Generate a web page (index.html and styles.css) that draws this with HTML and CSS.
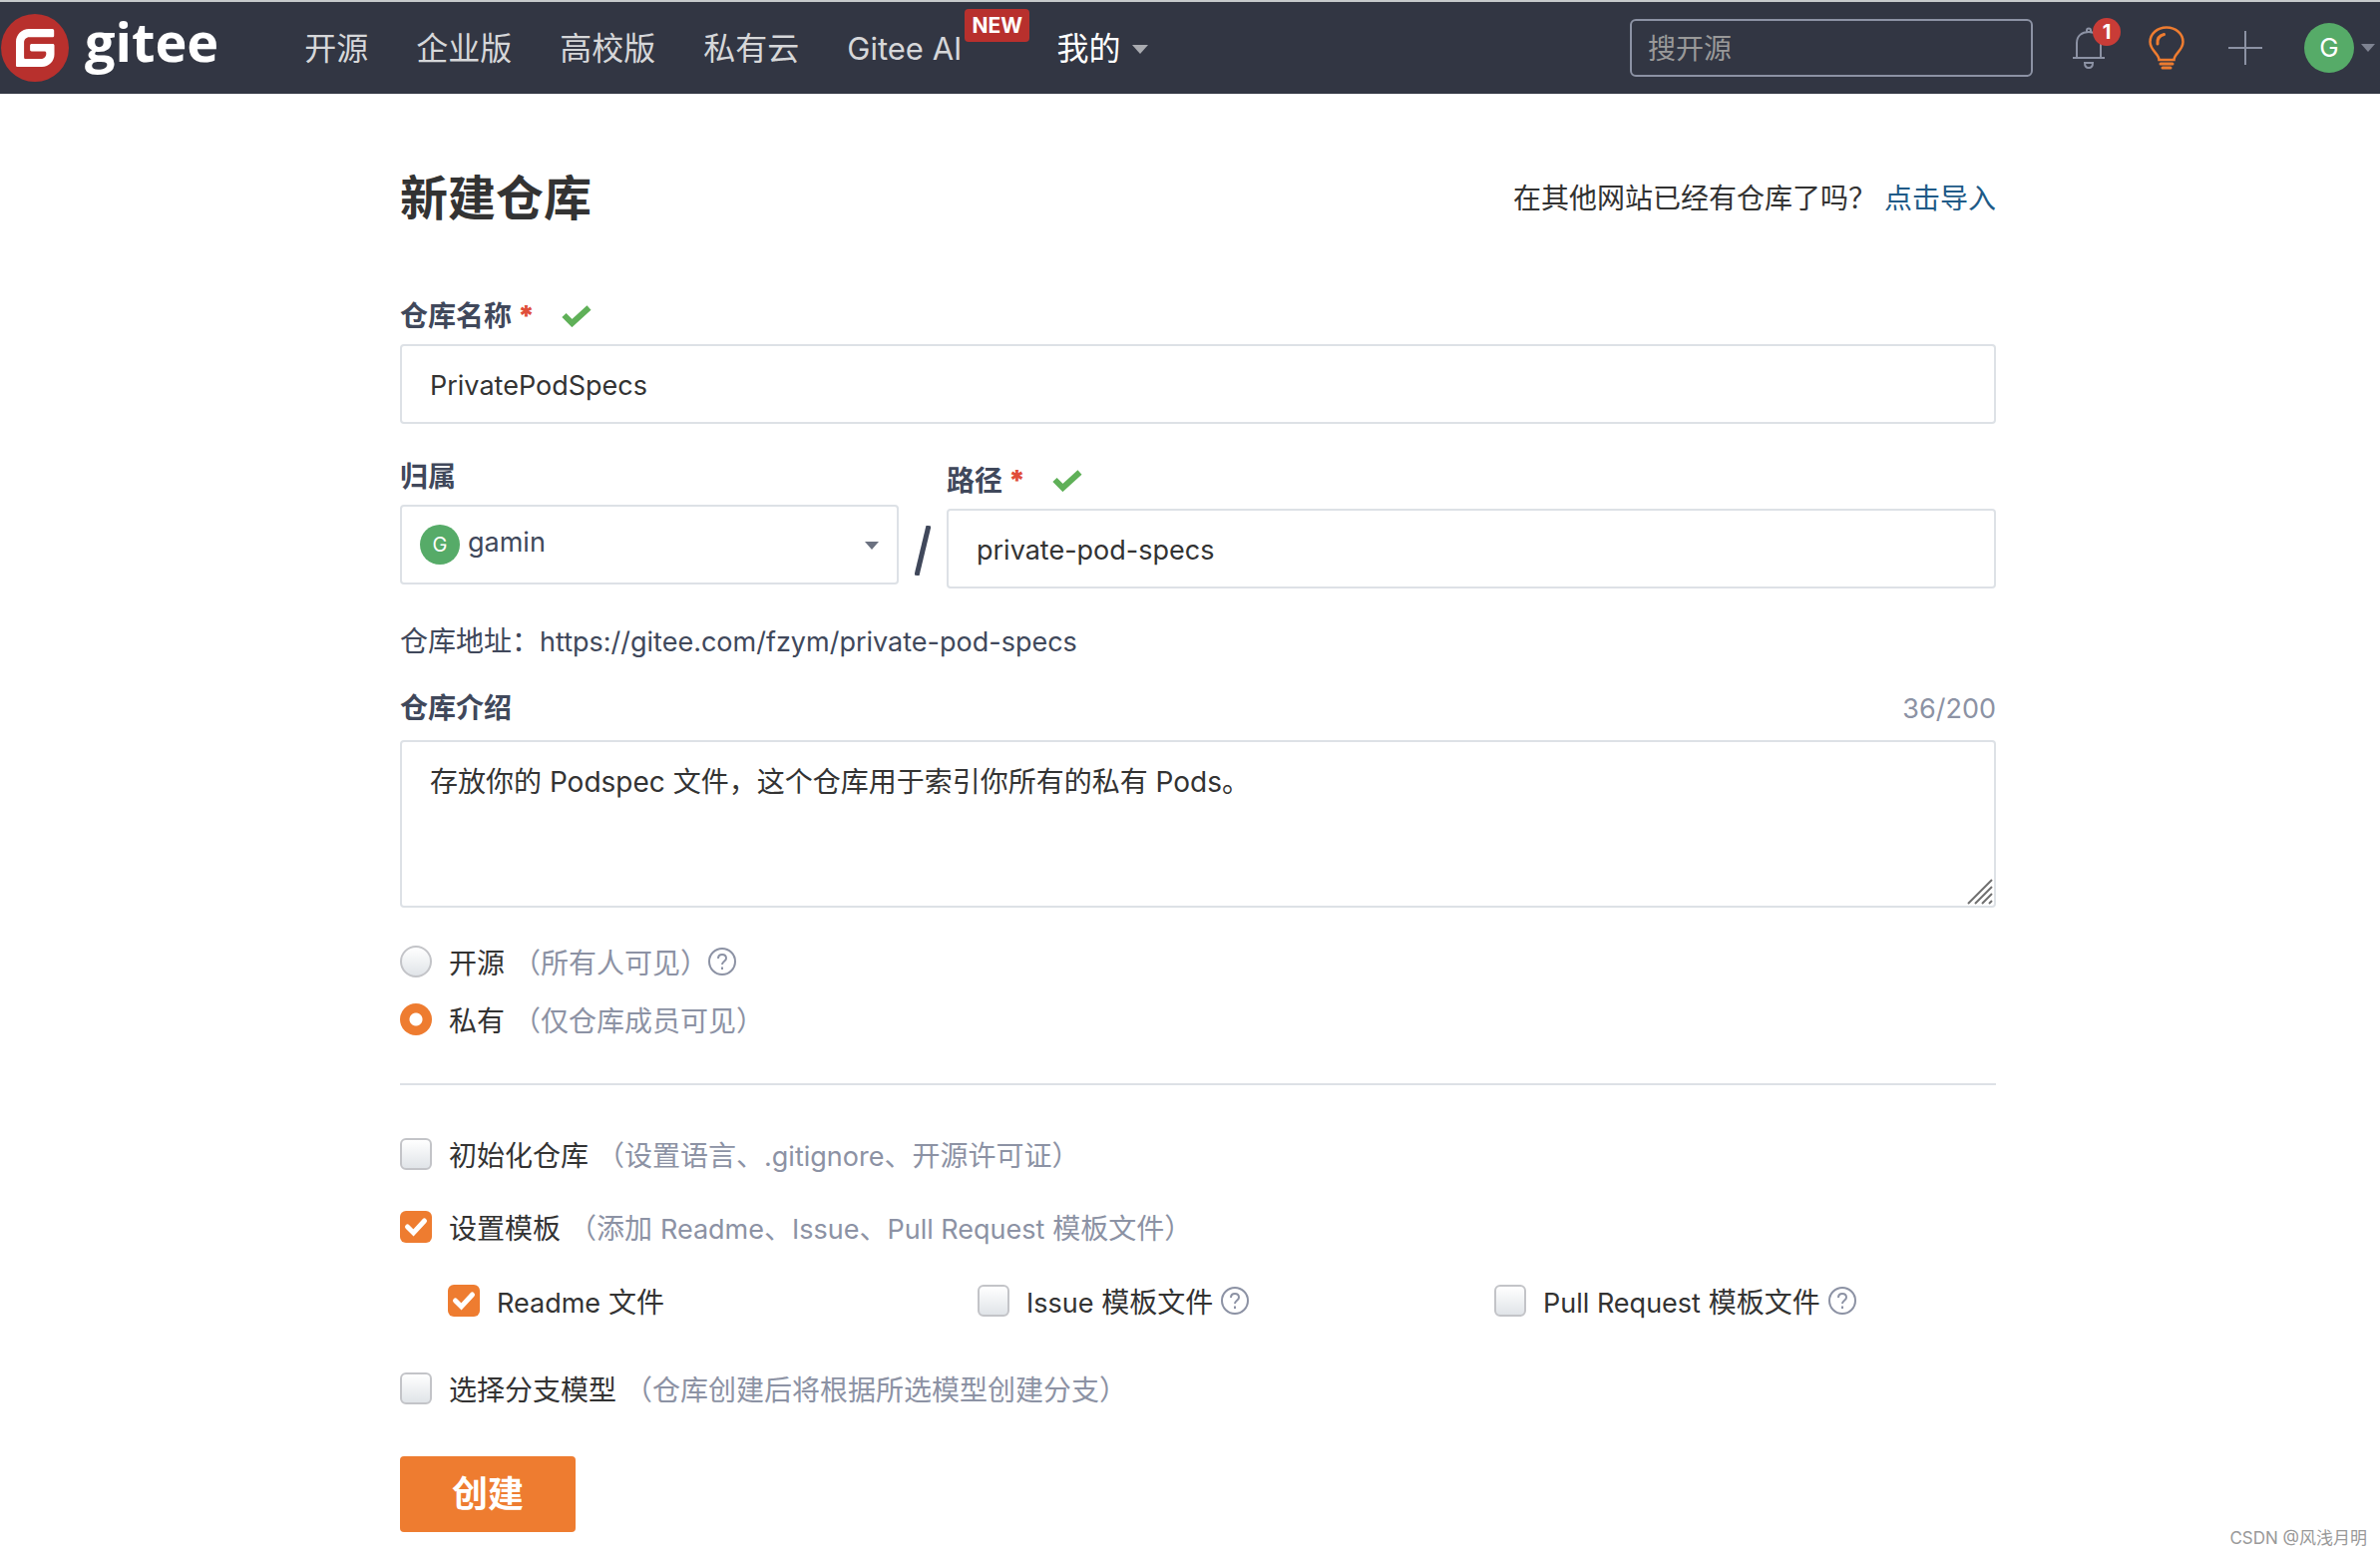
FILE: index.html
```html
<!DOCTYPE html>
<html lang="zh-CN">
<head>
<meta charset="utf-8">
<meta name="viewport" content="width=device-width, initial-scale=1">
<title>新建仓库 - Gitee</title>
<link rel="stylesheet" href="styles.css">
</head>
<body>
<header class="topbar">
  <a class="brand" href="#">
    <svg class="brand-mark" viewBox="0 0 68 68" aria-hidden="true">
      <circle cx="34" cy="34" r="34" fill="#b8302d"/>
      <path fill="#fff" d="M51.500 15H28C20.800 15 15 20.800 15 28v23.500c0 .9.700 1.600 1.600 1.600H41c7 0 12.500-5.600 12.500-12.500V31.600c0-.9-.7-1.600-1.600-1.600H30.700c-.9 0-1.600.7-1.600 1.600v4.200c0 .9.700 1.600 1.600 1.600h13c.9 0 1.600.7 1.600 1.600v1c0 2.700-2.200 5-5 5H24.700c-.9 0-1.600-.7-1.600-1.600V28.500c0-2.900 2.300-5.200 5.100-5.200h23.300c1 0 1.700-.7 1.700-1.600v-5c0-.9-.7-1.700-1.700-1.700z"/>
    </svg>
    <span class="brand-name">gitee</span>
  </a>
  <nav class="nav">
    <a href="#">开源</a>
    <a href="#">企业版</a>
    <a href="#">高校版</a>
    <a href="#">私有云</a>
    <a class="nav-ai" href="#">Gitee AI<span class="badge-new">NEW</span></a>
    <a class="nav-mine" href="#">我的<i class="caret"></i></a>
  </nav>
  <div class="tools">
    <input class="search" type="search" placeholder="搜开源" aria-label="搜开源">
    <button class="tool tool-bell" type="button" aria-label="通知">
      <svg width="34" height="42" viewBox="0 0 34 42" fill="none" stroke="#8c92a4" stroke-width="2">
        <path d="M1 31h32M5 31V16C5 9 10 5 17 5s12 4 12 11v15M15 5V3.500a2 2 0 0 1 4 0V5M13 36h8c0 3-1.500 5-4 5s-4-2-4-5z"/>
      </svg>
      <span class="count">1</span>
    </button>
    <button class="tool tool-bulb" type="button" aria-label="建议">
      <svg width="36" height="44" viewBox="0 0 36 44" fill="none" stroke="#ee7c30" stroke-width="2.500" stroke-linecap="round">
        <path d="M10.500 34c0-6-9-9.500-9-18C1.500 8 8.500 1.500 18 1.500S34.500 8 34.500 16c0 8.500-9 12-9 18z"/>
        <path d="M9 18c-.5-5 2-8.500 6.500-9.500" stroke-width="3"/>
        <path d="M12 38h12M14 42h8" stroke-width="3"/>
      </svg>
    </button>
    <button class="tool tool-plus" type="button" aria-label="新建">
      <svg width="34" height="34" viewBox="0 0 34 34" fill="none" stroke="#8c92a4" stroke-width="2"><path d="M0 17h34M17 0v34"/></svg>
    </button>
    <button class="tool tool-user" type="button" aria-label="用户菜单"><span class="avatar avatar-lg">G</span><i class="caret caret-dim"></i></button>
  </div>
</header>

<main class="page">
  <form class="form">
    <div class="title-row">
      <h1>新建仓库</h1>
      <p class="import">在其他网站已经有仓库了吗？<a href="#">点击导入</a></p>
    </div>

    <div class="field">
      <div class="label-row">
        <label for="name">仓库名称</label><span class="required">*</span>
        <svg class="ok" viewBox="0 0 30 22" aria-hidden="true"><path d="M2.500 10l8 8L27.500 2.500" fill="none" stroke="#5fb058" stroke-width="6"/></svg>
      </div>
      <input class="control" id="name" type="text" value="PrivatePodSpecs">
    </div>

    <div class="path-row">
      <div class="field owner">
        <div class="label-row"><label for="owner">归属</label></div>
        <div class="select-wrap">
          <select class="control select" id="owner"><option>gamin</option></select>
          <span class="avatar avatar-sm">G</span>
          <i class="caret caret-select"></i>
        </div>
      </div>
      <svg class="slash" viewBox="0 0 16 50" aria-hidden="true"><path d="M2 50L14 0" stroke="#40485b" stroke-width="5"/></svg>
      <div class="field path">
        <div class="label-row">
          <label for="path">路径</label><span class="required">*</span>
          <svg class="ok" viewBox="0 0 30 22" aria-hidden="true"><path d="M2.500 10l8 8L27.500 2.500" fill="none" stroke="#5fb058" stroke-width="6"/></svg>
        </div>
        <input class="control" id="path" type="text" value="private-pod-specs">
      </div>
    </div>

    <p class="address">仓库地址：<span class="latin">https://gitee.com/fzym/private-pod-specs</span></p>

    <div class="field intro">
      <div class="label-row"><label for="intro">仓库介绍</label><span class="counter latin">36/200</span></div>
      <div class="area-wrap">
        <textarea class="control area" id="intro">存放你的 Podspec 文件，这个仓库用于索引你所有的私有 Pods。</textarea>
        <svg class="grip" viewBox="0 0 26 26" aria-hidden="true"><path d="M1 25L25 1M8 25L25 8M15 25L25 15M22 25l3-3" stroke="#707070" stroke-width="2"/></svg>
      </div>
    </div>

    <div class="visibility">
      <div class="option">
        <input class="radio" type="radio" name="vis" id="public">
        <label for="public">开源<span class="hint">（所有人可见）</span></label>
        <svg class="help" viewBox="0 0 28 28" aria-hidden="true"><circle cx="14" cy="14" r="13"/><path d="M10 11c0-2.500 1.700-4 4-4s4 1.500 4 3.700c0 3-4 3-4 6.300M14 19.500v2.500"/></svg>
      </div>
      <div class="option">
        <input class="radio" type="radio" name="vis" id="private" checked>
        <label for="private">私有<span class="hint">（仅仓库成员可见）</span></label>
      </div>
    </div>

    <div class="setup">
      <div class="option">
        <input class="check" type="checkbox" id="init">
        <label for="init">初始化仓库<span class="hint">（设置语言、<span class="latin">.gitignore</span>、开源许可证）</span></label>
      </div>
      <div class="option">
        <input class="check" type="checkbox" id="tpl" checked>
        <label for="tpl">设置模板<span class="hint">（添加 <span class="latin">Readme</span>、<span class="latin">Issue</span>、<span class="latin">Pull Request</span> 模板文件）</span></label>
      </div>
      <div class="templates">
        <div class="option">
          <input class="check" type="checkbox" id="readme" checked>
          <label for="readme"><span class="latin">Readme</span> 文件</label>
        </div>
        <div class="option">
          <input class="check" type="checkbox" id="issue">
          <label for="issue"><span class="latin">Issue</span> 模板文件</label>
          <svg class="help help-gap" viewBox="0 0 28 28" aria-hidden="true"><circle cx="14" cy="14" r="13"/><path d="M10 11c0-2.500 1.700-4 4-4s4 1.500 4 3.700c0 3-4 3-4 6.300M14 19.500v2.500"/></svg>
        </div>
        <div class="option">
          <input class="check" type="checkbox" id="pr">
          <label for="pr"><span class="latin">Pull Request</span> 模板文件</label>
          <svg class="help help-gap" viewBox="0 0 28 28" aria-hidden="true"><circle cx="14" cy="14" r="13"/><path d="M10 11c0-2.500 1.700-4 4-4s4 1.500 4 3.700c0 3-4 3-4 6.300M14 19.500v2.500"/></svg>
        </div>
      </div>
      <div class="option">
        <input class="check" type="checkbox" id="branch">
        <label for="branch">选择分支模型<span class="hint">（仓库创建后将根据所选模型创建分支）</span></label>
      </div>
    </div>

    <button class="submit" type="submit">创建</button>
  </form>
</main>
<div class="watermark">CSDN @风浅月明</div>
</body>
</html>
```

FILE: styles.css
```css
*, *::before, *::after { box-sizing: border-box; }

body {
  margin: 0;
  background: #fff;
  color: #333;
  font: 28px/40px Inter, "Noto Sans CJK SC", sans-serif;
}

h1, p { margin: 0; }
a { text-decoration: none; }
button, input, select, textarea { font: inherit; color: inherit; }
svg { display: block; flex: none; }
.latin { font-size: 27px; line-height: 1; }

/* top bar */
.topbar {
  display: flex;
  align-items: center;
  height: 94px;
  border-top: 2px solid #c6cacb;
  background: #323643;
  white-space: nowrap;
}
.brand { display: flex; align-items: center; gap: 16px; padding-left: 1px; color: #fff; }
.brand-mark { width: 68px; height: 68px; }
.brand-name { padding-bottom: 14px; font: 700 54px/64px "Open Sans", sans-serif; }
.nav { display: flex; align-items: center; gap: 48px; margin-left: 86px; padding-top: 2px; font-size: 32px; }
.nav a { color: #d6d7d9; }
.nav .nav-ai { position: relative; margin-right: 47px; font-size: 31px; }
.badge-new {
  position: absolute;
  left: 100%;
  bottom: 27px;
  margin-left: 3px;
  padding: 0 7px;
  border-radius: 4px;
  background: #b8302d;
  color: #fff;
  font: 700 21px/33px Inter, sans-serif;
}
.nav .nav-mine { display: flex; align-items: center; gap: 12px; color: #fff; }
.caret {
  flex: none;
  border: 8px solid transparent;
  border-top: 9px solid #a9abb0;
  border-bottom: 0;
}
.caret-dim { border-width: 8px 7px 0; border-top-color: #7e8391; }
.tools { display: flex; align-items: center; margin-left: auto; padding-right: 5px; }
.search {
  width: 404px;
  height: 58px;
  padding: 2px 16px 0;
  border: 2px solid #8c92a4;
  border-radius: 6px;
  background: none;
  outline: 0;
}
.search::placeholder { color: #999; opacity: 1; }
.tool { position: relative; padding: 0; border: 0; background: none; }
.tool-bell { margin-left: 39px; }
.tool-bulb { margin-left: 43px; }
.tool-plus { margin-left: 44px; }
.tool-user { display: flex; align-items: center; gap: 7px; margin-left: 42px; }
.count {
  position: absolute;
  left: 21px;
  bottom: 23px;
  width: 28px;
  border-radius: 14px;
  background: #c93c37;
  color: #fff;
  font: 700 20px/28px Inter, sans-serif;
}
.avatar { border-radius: 50%; background: #56ab68; color: #fff; text-align: center; }
.avatar-lg { width: 50px; font-size: 26px; line-height: 50px; }
.avatar-sm { position: absolute; left: 20px; top: 20px; width: 40px; font-size: 20px; line-height: 40px; }

/* form */
.page { padding: 73px 0 24px 16px; }
.form { max-width: 1600px; margin: 0 auto; }
.title-row { display: flex; align-items: center; justify-content: space-between; margin-bottom: 66px; }
h1 { font-size: 48px; line-height: 64px; }
.import a { margin-left: 8px; color: #205a87; }
.label-row { display: flex; align-items: center; margin-bottom: 8px; color: #40485b; }
.label-row label { font-weight: 700; }
.required { margin-left: 6px; color: #e04e39; font-weight: 900; }
.ok { width: 30px; height: 22px; margin-left: 27px; }
.control {
  display: block;
  width: 100%;
  height: 80px;
  padding: 2px 28px 0;
  border: 2px solid #dde1e6;
  border-radius: 4px;
  background: #fff;
  outline: 0;
  font-size: 27px;
}
.path-row { display: flex; align-items: flex-start; margin: 33px 0; }
.owner { width: 500px; }
.path { flex: 1; padding-top: 4px; }
.slash { width: 16px; height: 50px; margin: 69px 16px 0; }
.select-wrap, .area-wrap { position: relative; }
.select { padding: 0 66px 4px; appearance: none; color: #40485b; }
.caret-select { position: absolute; right: 20px; top: 37px; border-width: 8px 7px 0; border-top-color: #6b7180; }
.address { color: #40485b; }
.intro { margin-top: 27px; }
.intro .label-row { justify-content: space-between; margin-bottom: 12px; }
.counter { color: #8c92a4; }
.area { height: 168px; padding: 20px 28px; resize: none; font-size: 28px; }
.grip { position: absolute; right: 3px; bottom: 3px; width: 26px; height: 26px; }

/* options */
.option { display: flex; align-items: center; }
.option label { margin-left: 17px; padding-top: 4px; }
.hint { margin-left: 8px; color: #8c92a4; }
.help { width: 28px; height: 28px; fill: none; stroke: #8c92a4; stroke-width: 2; }
.help-gap { margin-left: 8px; }
.radio, .check {
  flex: none;
  width: 32px;
  height: 32px;
  margin: 0;
  border: 2px solid #c3c4c8;
  border-radius: 6px;
  background: linear-gradient(#fff, #e0e4e8);
  appearance: none;
}
.radio { border-radius: 50%; }
.radio:checked { border: 0; background: radial-gradient(circle, #fff 6px, #ee7c30 7px); }
.check:checked {
  border: 0;
  background: #ee7c30 url("data:image/svg+xml,%3Csvg xmlns='http://www.w3.org/2000/svg' viewBox='0 0 32 32'%3E%3Cpath d='M7.500 16l6 6L24.500 10' fill='none' stroke='white' stroke-width='5' stroke-linecap='round'/%3E%3C/svg%3E") center / 32px;
}
.visibility { display: grid; gap: 14px; margin-top: 32px; padding-bottom: 42px; border-bottom: 2px solid #dde1e6; }
.setup { display: grid; gap: 29px; margin: 47px 0 46px; }
.templates { display: grid; grid-template-columns: 531fr 518fr 503fr; margin: 1px 0 15px 48px; }
.submit {
  display: block;
  width: 176px;
  height: 76px;
  border: 0;
  border-radius: 4px;
  background: #ee7c30;
  color: #fff;
  font-size: 36px;
  font-weight: 700;
}
.watermark { position: absolute; right: 13px; top: 1527px; color: #999; font-size: 17px; line-height: 30px; }
```
